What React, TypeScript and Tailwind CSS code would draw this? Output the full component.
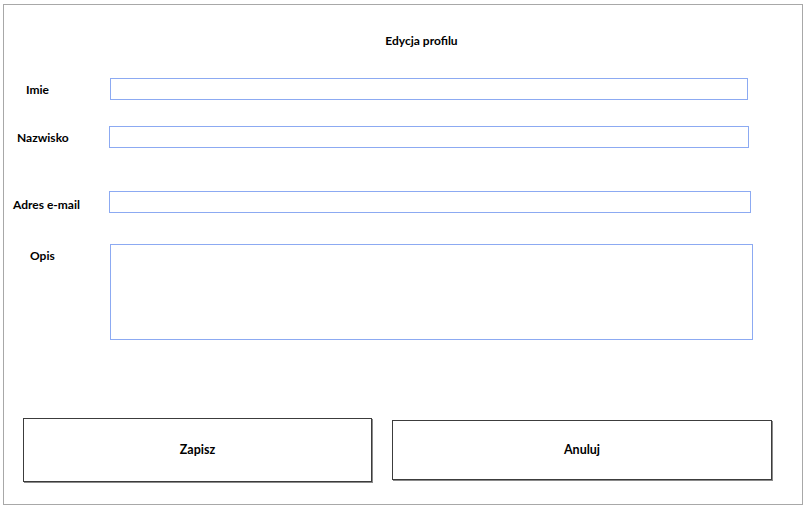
import React from 'react'

const etykieta = "font-['Lato','Liberation_Sans',sans-serif] text-[12px] font-bold text-black"
const pole = 'flex-none h-[22px] border border-[#8caaf2] bg-white outline-none'
const przycisk =
  "flex flex-none items-center justify-center border border-[#3c3c3c] bg-white pt-[1px] shadow-[1px_1px_0_#8a8a8a] font-['Lato','Liberation_Sans',sans-serif] text-[12.5px] font-bold text-black"

export default function App() {
  return (
    <div className="min-h-[511px] bg-white pl-[3px] pt-[4px]">
      <div className="flex h-[501px] w-[800px] flex-col border border-[#a8a8a8] bg-white">
        <h1 className={`mt-[28px] h-[16px] pl-[37px] text-center text-[12.5px] leading-[16px] ${etykieta}`}>
          Edycja profilu
        </h1>

        <div className="mt-[29px] flex items-center">
          <label className={`w-[106px] flex-none pl-[22px] pt-[1px] ${etykieta}`}>Imie</label>
          <input className={`${pole} w-[638px]`} />
        </div>

        <div className="mt-[26px] flex items-center">
          <label className={`w-[105px] flex-none pl-[13px] pt-[2px] ${etykieta}`}>Nazwisko</label>
          <input className={`${pole} w-[640px]`} />
        </div>

        <div className="mt-[43px] flex h-[22px] items-start">
          <label className={`mt-[7px] w-[105px] flex-none pl-[9px] leading-[14px] ${etykieta}`}>
            Adres e-mail
          </label>
          <input className={`${pole} w-[642px]`} />
        </div>

        <div className="mt-[31px] flex items-start">
          <label className={`mt-[4px] w-[106px] flex-none pl-[26px] leading-[16px] ${etykieta}`}>
            Opis
          </label>
          <textarea className="h-[96px] w-[643px] flex-none resize-none border border-[#8caaf2] bg-white outline-none" />
        </div>

        <div className="mt-[78px] flex items-center gap-[20px] pl-[19px]">
          <button type="button" className={`${przycisk} h-[64px] w-[349px]`}>
            Zapisz
          </button>
          <button type="button" className={`${przycisk} h-[60px] w-[380px]`}>
            Anuluj
          </button>
        </div>
      </div>
    </div>
  )
}
